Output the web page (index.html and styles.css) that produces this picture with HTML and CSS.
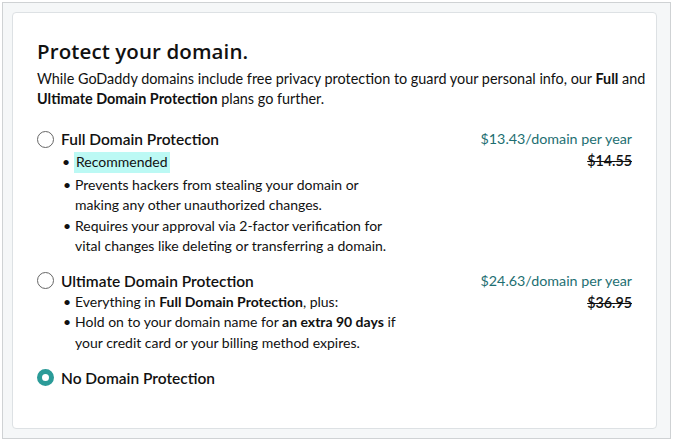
FILE: index.html
```html
<!DOCTYPE html>
<html>
<head>
<meta charset="utf-8">
<link rel="stylesheet" href="styles.css">
</head>
<body>
<div class="frame">
  <div class="card">
    <h1 class="title">Protect your domain.</h1>
    <p class="intro">While GoDaddy domains include free privacy protection to guard your personal info, our <b>Full</b> and<br><b>Ultimate Domain Protection</b> plans go further.</p>

    <div class="option first">
      <div class="opt-main">
        <div class="opt-head">
          <span class="radio"></span>
          <span class="opt-name">Full Domain Protection</span>
        </div>
        <ul class="bullets">
          <li class="rec-item"><span class="rec">Recommended</span></li>
          <li>Prevents hackers from stealing your domain or<br>making any other unauthorized changes.</li>
          <li>Requires your approval via 2-factor verification for<br>vital changes like deleting or transferring a domain.</li>
        </ul>
      </div>
      <div class="price">
        <div class="now">$13.43/domain per year</div>
        <div class="was">$14.55</div>
      </div>
    </div>

    <div class="option">
      <div class="opt-main">
        <div class="opt-head">
          <span class="radio"></span>
          <span class="opt-name">Ultimate Domain Protection</span>
        </div>
        <ul class="bullets loose">
          <li>Everything in <b>Full Domain Protection</b>, plus:</li>
          <li>Hold on to your domain name for <b>an extra 90 days</b> if<br>your credit card or your billing method expires.</li>
        </ul>
      </div>
      <div class="price">
        <div class="now">$24.63/domain per year</div>
        <div class="was">$36.95</div>
      </div>
    </div>

    <div class="option">
      <div class="opt-main">
        <div class="opt-head">
          <span class="radio checked"></span>
          <span class="opt-name">No Domain Protection</span>
        </div>
      </div>
    </div>
  </div>
</div>
</body>
</html>
```

FILE: styles.css
```css
html, body {
  margin: 0;
  padding: 0;
  background: #ffffff;
}
body {
  font-family: Lato, "Noto Sans", sans-serif;
  color: #111111;
}
.frame {
  box-sizing: border-box;
  margin: 2px 0 0 2px;
  width: 669px;
  height: 437px;
  border: 1px solid #cfd2d4;
  background: #f5f7f8;
  padding: 9px;
}
.card {
  box-sizing: border-box;
  width: 645px;
  height: 417px;
  background: #ffffff;
  border: 1px solid #dde1e4;
  border-radius: 4px;
  padding: 26px 24px 0 24px;
}
.title {
  margin: 0;
  font-family: "Open Sans", Lato, sans-serif;
  font-size: 20.5px;
  line-height: 24px;
  font-weight: 600;
  letter-spacing: 0.1px;
}
.intro {
  margin: 6px -24px 0 0;
  font-size: 14.4px;
  line-height: 20px;
  white-space: nowrap;
}
.intro b { font-weight: 700; }
.option {
  display: flex;
  justify-content: space-between;
  align-items: flex-start;
  margin-top: 13px;
}
.option.first {
  margin-top: 19px;
}
.opt-head {
  display: flex;
  align-items: center;
  gap: 7px;
  height: 22px;
}
.radio {
  box-sizing: border-box;
  width: 17px;
  height: 17px;
  border-radius: 50%;
  border: 1.6px solid #666666;
  background: #fff;
}
.radio.checked {
  border: 5px solid #2b9b98;
}
.opt-name {
  font-size: 15.5px;
  font-weight: 600;
}
.bullets {
  list-style: none;
  margin: 0;
  padding: 0 0 0 38px;
  font-size: 14px;
  line-height: 20.5px;
  width: 360px;
}
.bullets.loose {
  line-height: 20.8px;
}
.bullets li {
  position: relative;
}
.bullets li::before {
  content: "•";
  position: absolute;
  left: -12px;
  top: 0;
}
.bullets li.rec-item::before {
  left: -13px;
}
.bullets b { font-weight: 700; }
.rec-item {
  margin: 2px 0 2px 0;
}
.rec {
  display: inline-block;
  background: #bcf9f4;
  padding: 0 2px;
  margin-left: -1px;
}
.price {
  text-align: right;
  font-size: 14.3px;
  line-height: 22px;
}
.now {
  color: #1e6f72;
}
.was {
  text-decoration: line-through;
  color: #111;
  font-weight: 600;
}
```
